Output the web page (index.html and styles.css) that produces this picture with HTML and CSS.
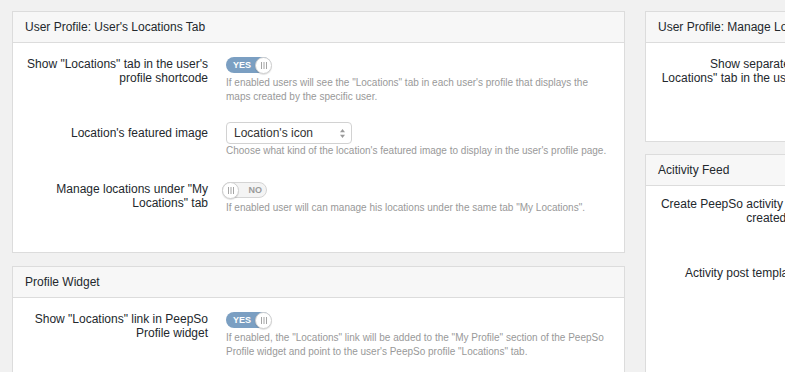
FILE: index.html
```html
<!DOCTYPE html>
<html>
<head>
<meta charset="utf-8">
<link rel="stylesheet" href="styles.css">
</head>
<body>
<div class="page">
  <div class="col">
    <section class="card">
      <div class="card-h">User Profile: User's Locations Tab</div>
      <div class="card-b">
        <div class="row">
          <div class="label">Show "Locations" tab in the user's profile shortcode</div>
          <div class="ctl">
            <span class="tgl on"><span class="tgl-t">YES</span><span class="knob"><svg width="8" height="7" viewBox="0 0 8 7"><rect x="1" y="0" width="1" height="7"/><rect x="3.5" y="0" width="1" height="7"/><rect x="6" y="0" width="1" height="7"/></svg></span></span>
            <div class="desc">If enabled users will see the "Locations" tab in each user's profile that displays the maps created by the specific user.</div>
          </div>
        </div>
        <div class="row sel-row">
          <div class="label">Location's featured image</div>
          <div class="ctl">
            <span class="select">Location's icon<svg class="arr" width="5" height="9" viewBox="0 0 5 9"><path d="M2.5 0L5 3.2H0Z"/><path d="M2.5 9L5 5.8H0Z"/></svg></span>
            <div class="desc">Choose what kind of the location's featured image to display in the user's profile page.</div>
          </div>
        </div>
        <div class="row">
          <div class="label">Manage locations under "My Locations" tab</div>
          <div class="ctl">
            <span class="tgl off"><span class="knob"><svg width="8" height="7" viewBox="0 0 8 7"><rect x="1" y="0" width="1" height="7"/><rect x="3.5" y="0" width="1" height="7"/><rect x="6" y="0" width="1" height="7"/></svg></span><span class="tgl-t">NO</span></span>
            <div class="desc">If enabled user will can manage his locations under the same tab "My Locations".</div>
          </div>
        </div>
      </div>
    </section>
    <section class="card">
      <div class="card-h">Profile Widget</div>
      <div class="card-b">
        <div class="row">
          <div class="label">Show "Locations" link in PeepSo Profile widget</div>
          <div class="ctl">
            <span class="tgl on"><span class="tgl-t">YES</span><span class="knob"><svg width="8" height="7" viewBox="0 0 8 7"><rect x="1" y="0" width="1" height="7"/><rect x="3.5" y="0" width="1" height="7"/><rect x="6" y="0" width="1" height="7"/></svg></span></span>
            <div class="desc">If enabled, the "Locations" link will be added to the "My Profile" section of the PeepSo Profile widget and point to the user's PeepSo profile "Locations" tab.</div>
          </div>
        </div>
      </div>
    </section>
  </div>
  <div class="col col-r">
    <section class="card">
      <div class="card-h">User Profile: Manage Locations Tab</div>
      <div class="card-b">
        <div class="row">
          <div class="label">Show separate "Manage Locations" tab in the user's profile</div>
          <div class="ctl">
            <span class="tgl on"><span class="tgl-t">YES</span><span class="knob"></span></span>
            <div class="desc">If enabled users will see a separate tab to manage their own locations in the profile page.</div>
          </div>
        </div>
      </div>
    </section>
    <section class="card">
      <div class="card-h">Acitivity Feed</div>
      <div class="card-b card-b-tight">
        <div class="row">
          <div class="label">Create PeepSo activity post when created a location</div>
          <div class="ctl">
            <span class="tgl on"><span class="tgl-t">YES</span><span class="knob"></span></span>
            <div class="desc">If enabled, a new activity post will be added to the stream each time a location is created.</div>
          </div>
        </div>
        <div class="row sel-row">
          <div class="label">Activity post template for new locations</div>
          <div class="ctl">
            <div class="textarea">created a new location</div>
            <div class="desc">Template of the activity post.</div>
          </div>
        </div>
      </div>
    </section>
  </div>
</div>
</body>
</html>
```

FILE: styles.css
```css
html, body {
  margin: 0;
  padding: 0;
  background: #f1f1f1;
  overflow: hidden;
  width: 785px;
  height: 372px;
}
body {
  font-family: "Liberation Sans", Arial, sans-serif;
  color: #23282d;
}
.page {
  display: flex;
  gap: 20px;
  padding: 11px 0 0 12px;
  width: 1300px;
}
.col {
  display: flex;
  flex-direction: column;
  gap: 13px;
  width: 613px;
  flex: none;
}
.col-r {
  gap: 12px;
}
.card {
  background: #fff;
  border: 1px solid #dcdcdc;
}
.card-h {
  height: 30px;
  line-height: 30px;
  padding: 0 12px;
  background: #f7f7f7;
  border-bottom: 1px solid #dcdcdc;
  font-size: 12px;
  color: #23282d;
  white-space: nowrap;
}
.card-b {
  padding: 11px 12px 37px;
  display: flex;
  flex-direction: column;
  gap: 18px;
}
.card-b-tight {
  padding-top: 8px;
}
.row {
  display: flex;
  gap: 18px;
  align-items: flex-start;
}
.label {
  width: 183px;
  flex: none;
  text-align: right;
  font-size: 12px;
  line-height: 14px;
  padding-top: 3px;
  color: #23282d;
}
.sel-row .label {
  padding-top: 4px;
}
.sel-row .desc {
  margin-top: 0;
  margin-bottom: 3px;
}
.ctl {
  flex: 1;
  min-width: 0;
}
.desc {
  margin-top: 3px;
  font-size: 10px;
  line-height: 14px;
  color: #999;
}
.tgl {
  display: flex;
  align-items: center;
  width: 45px;
  height: 16px;
  margin-top: 3px;
  border-radius: 9px;
  box-sizing: border-box;
}
.tgl.on {
  background: #7b9fc2;
  justify-content: space-between;
}
.tgl.off {
  background: #f4f4f4;
  border: 1px solid #d4d4d4;
  margin-left: -4px;
  justify-content: space-between;
}
.tgl-t {
  font-size: 9px;
  font-weight: bold;
  line-height: 16px;
}
.tgl.on .tgl-t {
  color: #fff;
  padding-left: 7px;
}
.tgl.off .tgl-t {
  color: #9a9a9a;
  padding-right: 4px;
}
.knob {
  width: 17px;
  height: 17px;
  border-radius: 50%;
  background: #fff;
  border: 1px solid #cfcfcf;
  box-sizing: border-box;
  display: flex;
  align-items: center;
  justify-content: center;
  box-shadow: 0 1px 1px rgba(0,0,0,0.12);
}
.tgl.on .knob {
  margin-right: -1px;
}
.tgl.off .knob {
  margin-left: -1px;
}
.knob svg {
  fill: #a5a5a5;
}
.select {
  display: flex;
  align-items: center;
  justify-content: space-between;
  width: 126px;
  height: 22px;
  box-sizing: border-box;
  border: 1px solid #d2d2d2;
  border-radius: 4px;
  padding: 0 6px 0 7px;
  font-size: 12px;
  color: #333;
  background: #fff;
}
.textarea {
  height: 90px;
  box-sizing: border-box;
  border: 1px solid #d2d2d2;
  border-radius: 4px;
  padding: 4px 7px;
  font-size: 12px;
  color: #333;
}
.arr {
  fill: #999;
}
```
